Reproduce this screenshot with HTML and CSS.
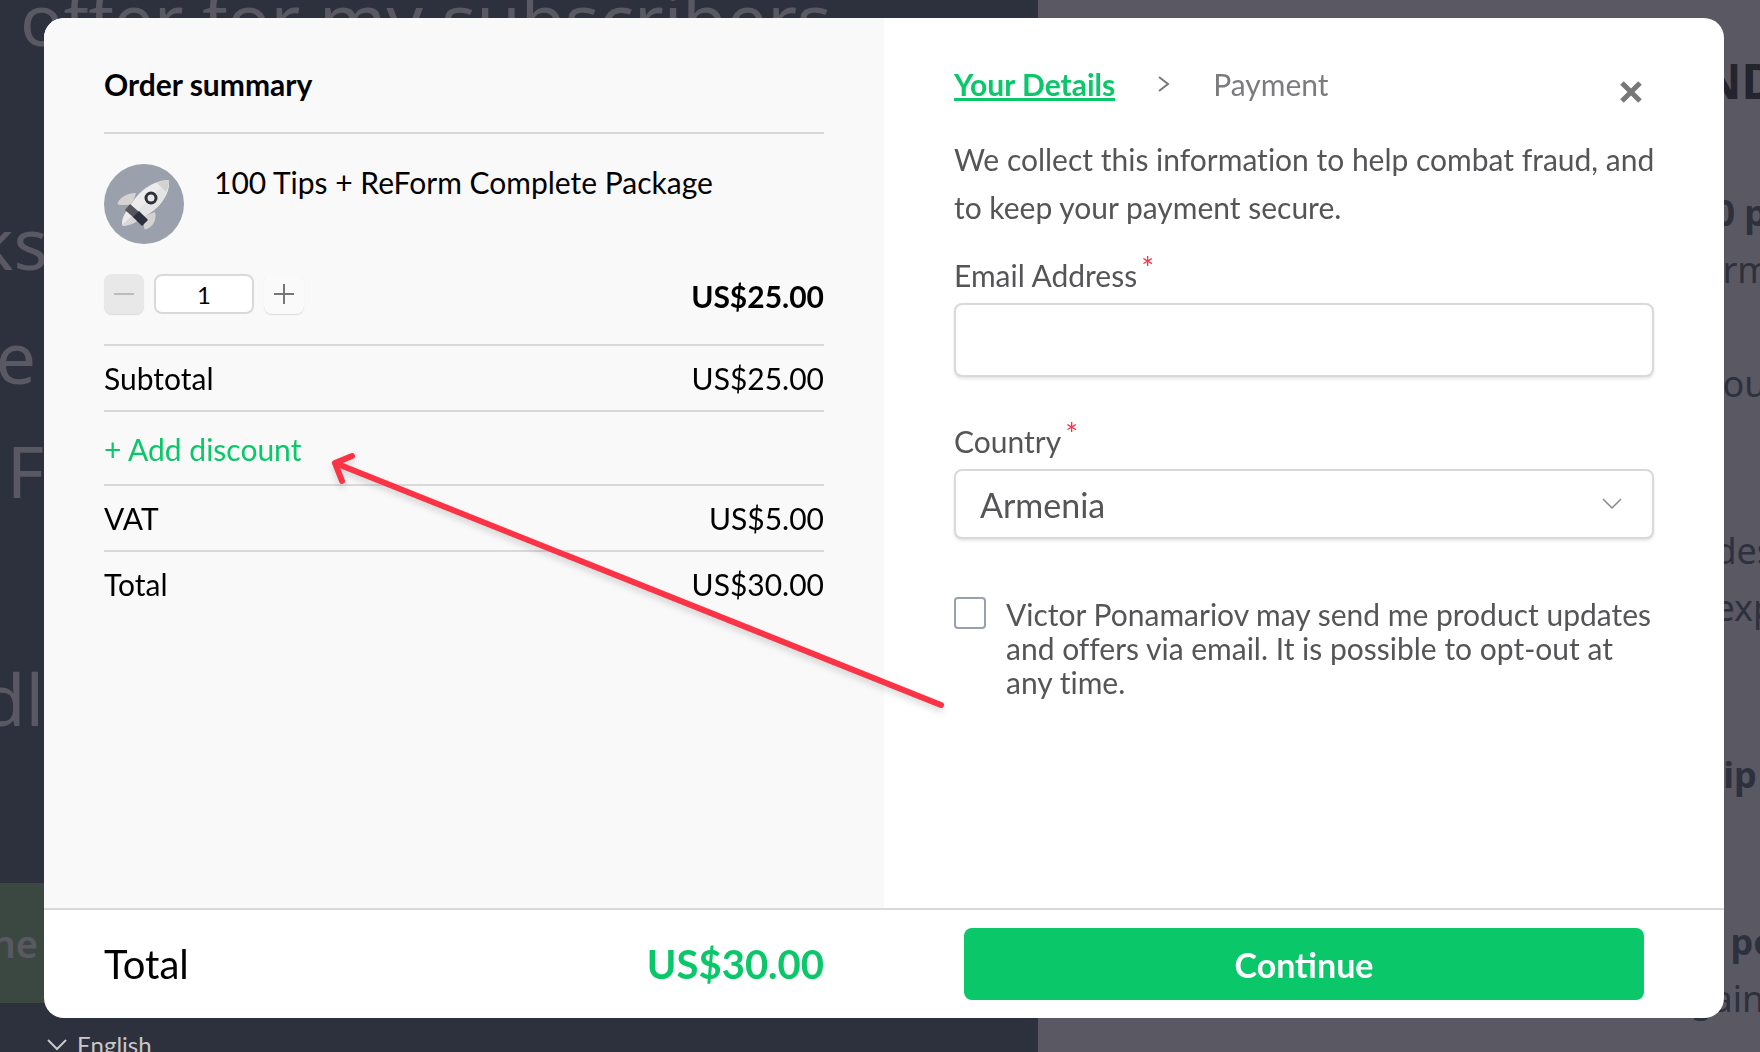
FILE: index.html
```html
<!DOCTYPE html>
<html lang="en">
<head>
    <meta charset="UTF-8">
    <meta name="viewport" content="width=device-width, initial-scale=1.0">
    <title>Checkout</title>
    <link rel="stylesheet" href="styles.css">
</head>
<body>

    <!-- page behind the dialog -->
    <div class="page" aria-hidden="true">
        <div class="page-left">
            <p class="hero-title">offer for my subscribers</p>
            <p class="hero-line line-ks"><span>ks</span></p>
            <p class="hero-line line-e"><span>e</span></p>
            <p class="hero-line line-f"><span>F</span></p>
            <p class="hero-line line-dl"><span>dl</span></p>
            <p class="hero-button"><span>he</span></p>
            <p class="language">
                <svg width="20" height="12" viewBox="0 0 20 12"><path d="M1 1l9 9 9-9" fill="none" stroke="#c9c7c7" stroke-width="2"/></svg>
                English
            </p>
        </div>
        <div class="page-right">
            <p class="side-title indent-1">ND</p>
            <p class="side-line side-bold indent-2">0 p</p>
            <p class="side-line indent-3">rm</p>
            <p class="side-line side-gap indent-3">ou</p>
            <p class="side-line side-gap-big indent-2">des</p>
            <p class="side-line indent-2">exp</p>
            <p class="side-line side-bold side-gap-big indent-1">Tip</p>
            <p class="side-line side-bold side-gap-big indent-4">po</p>
            <p class="side-line">gain</p>
        </div>
    </div>

    <div class="overlay">
        <div class="modal" role="dialog" aria-label="Checkout">
            <section class="summary">
                <h2 class="summary-title">Order summary</h2>

                <div class="product">
                    <svg class="product-icon" viewBox="0 0 80 80">
                        <circle cx="40" cy="40" r="40" fill="#9aa0ac"/>
                        <path d="M32 29C23 29 17 33 14 38c-1 2 0 3 2 3h12z" fill="#d5d2d2"/>
                        <path d="M51 48c2 8-2 14-8 17-2 1-3 0-3-2V52z" fill="#d5d2d2"/>
                        <path d="M26 44c-6 5-8 11-8 16 0 2 1 2 3 2 6-1 11-3 15-8z" fill="#d8d6d6"/>
                        <path d="M26 44c-6 5-8 11-8 17l13-12z" fill="#eceaea"/>
                        <path d="M65 16C50 16 34 27 27 41l12 12c14-7 27-20 26-37z" fill="#ececed"/>
                        <path d="M65 16L33 47l6 6c14-7 27-20 26-37z" fill="#e3e4e4"/>
                        <path d="M65 16c-4 0-8 1-12 3l9 9c2-4 3-8 3-12z" fill="#d3d1d1"/>
                        <path d="M26 40l17 15-5 6-17-15z" fill="#55545d"/>
                        <path d="M35 47l9 9-6 6-9-9z" fill="#2c303d"/>
                        <circle cx="47" cy="34" r="5" fill="#e8e8e8" stroke="#2c303d" stroke-width="3"/>
                    </svg>
                    <p class="product-name">100 Tips + ReForm Complete Package</p>
                </div>

                <div class="quantity">
                    <button class="step step-off" type="button" aria-label="Decrease" disabled>
                        <svg width="20" height="20" viewBox="0 0 20 20"><path d="M0 10h20" stroke="#bdbdbe" stroke-width="2"/></svg>
                    </button>
                    <input class="quantity-input" type="text" value="1" aria-label="Quantity">
                    <button class="step" type="button" aria-label="Increase">
                        <svg width="20" height="20" viewBox="0 0 20 20"><path d="M0 10h20M10 0v20" stroke="#777" stroke-width="2"/></svg>
                    </button>
                    <strong class="quantity-price">US$25.00</strong>
                </div>

                <div class="row"><span>Subtotal</span><span>US$25.00</span></div>
                <div class="row row-discount"><a class="discount" href="#">+ Add discount</a></div>
                <div class="row"><span>VAT</span><span>US$5.00</span></div>
                <div class="row"><span>Total</span><span>US$30.00</span></div>
            </section>

            <form class="details" id="details">
                <div class="details-head">
                    <nav class="steps">
                        <a class="steps-current" href="#details">Your Details</a>
                        <svg width="12" height="16" viewBox="0 0 12 16"><path d="M1 1l9 7-9 7" fill="none" stroke="#777" stroke-width="2"/></svg>
                        <span>Payment</span>
                    </nav>
                    <button class="close" type="button" aria-label="Close">
                        <svg width="24" height="24" viewBox="0 0 24 24"><path d="M3 3l18 18M21 3L3 21" stroke="#77777a" stroke-width="5"/></svg>
                    </button>
                </div>

                <p class="intro">We collect this information to help combat fraud, and to keep your payment secure.</p>

                <label class="label" for="email">Email Address<sup>*</sup></label>
                <input class="field" id="email" type="email">

                <label class="label label-country" for="country">Country<sup>*</sup></label>
                <div class="select">
                    <select class="field field-select" id="country">
                        <option>Armenia</option>
                    </select>
                    <svg class="select-arrow" width="20" height="12" viewBox="0 0 20 12"><path d="M1 1l9 9 9-9" fill="none" stroke="#88888c" stroke-width="1.5"/></svg>
                </div>

                <div class="consent">
                    <input class="checkbox" id="consent" type="checkbox">
                    <label for="consent">Victor Ponamariov may send me product updates and offers via email. It is possible to opt-out at any time.</label>
                </div>
            </form>

            <footer class="footer">
                <div class="footer-total">
                    <span>Total</span>
                    <strong>US$30.00</strong>
                </div>
                <div class="footer-action">
                    <button class="continue" type="submit" form="details">Continue</button>
                </div>
            </footer>
        </div>
    </div>

    <!-- arrow pointing at the discount link -->
    <svg class="arrow" width="640" height="280" viewBox="0 0 640 280">
        <path d="M621 255L15 13M32 6L15 13l7 18" fill="none" stroke="#fa3446" stroke-width="6" stroke-linecap="round" stroke-linejoin="round"/>
    </svg>

</body>
</html>
```
FILE: styles.css
```css
* {
    box-sizing: border-box;
}
body, html {
    margin: 0;
    padding: 0;
    height: 100%;
    overflow: hidden;
}
body {
    font-family: Lato, sans-serif;
    font-size: 30px;
    line-height: 36px;
    font-variant-ligatures: none;
    color: #000;
}
p, h2 {
    margin: 0;
}
a {
    text-decoration: none;
}
button, input, select {
    font-family: inherit;
    font-size: inherit;
    color: inherit;
}

/* Page behind */
.page {
    display: grid;
    grid-template-columns: 59% 41%;
    height: 100%;
    overflow: hidden;
    font-family: "Noto Sans", sans-serif;
    white-space: nowrap;
}
.page-left {
    background: #2d303d;
    color: #5a5963;
    overflow: hidden;
}
.hero-title {
    padding-left: 20px;
    margin-top: -32px;
    font-size: 72px;
    line-height: 100px;
}
.hero-line {
    display: flex;
    justify-content: flex-end;
    width: 44px;
    font-size: 72px;
    line-height: 114px;
}
.line-ks {
    width: 48px;
    margin-top: 117px;
}
.line-e {
    width: 36px;
}
.line-dl {
    margin-top: 114px;
}
.hero-button {
    display: flex;
    justify-content: flex-end;
    align-items: center;
    width: 44px;
    height: 120px;
    padding-right: 6px;
    margin-top: 128px;
    background: #3b4842;
    font-size: 38px;
    font-weight: 600;
}
.language {
    display: flex;
    align-items: center;
    gap: 10px;
    padding-left: 47px;
    margin-top: 24px;
    font-family: Lato, sans-serif;
    font-size: 24px;
    color: #c9c7c7;
}
.page-right {
    padding: 46px 0 0 652px;
    background: #5a5963;
    color: #2d303d;
    overflow: hidden;
}
.side-title {
    margin-bottom: 68px;
    font-size: 48px;
    font-weight: 700;
    line-height: 70px;
    color: #24242e;
}
.side-line {
    font-size: 36px;
    line-height: 57px;
}
.side-bold {
    font-weight: 700;
}
.side-gap {
    margin-top: 57px;
}
.side-gap-big {
    margin-top: 110px;
}
.indent-1 {
    padding-left: 12px;
}
.indent-2 {
    padding-left: 24px;
}
.indent-3 {
    padding-left: 32px;
}
.indent-4 {
    padding-left: 40px;
}

/* Modal */
.overlay {
    position: fixed;
    inset: 0;
    padding: 18px 36px 34px 44px;
}
.modal {
    display: grid;
    grid-template-columns: 1fr 1fr;
    grid-template-rows: 1fr auto;
    height: 100%;
    border-radius: 20px;
    background: #fff;
    overflow: hidden;
}

/* Order summary */
.summary {
    padding: 48px 60px 0;
    background: #f9f9f9;
}
.summary-title {
    padding-bottom: 30px;
    border-bottom: 2px solid #d9d9d9;
    font-size: 30px;
    font-weight: 700;
}
.product {
    display: flex;
    gap: 30px;
    padding: 30px 0;
}
.product-icon {
    width: 80px;
    height: 80px;
}
.quantity {
    display: flex;
    align-items: center;
    gap: 10px;
    padding-bottom: 30px;
}
.step {
    display: flex;
    align-items: center;
    justify-content: center;
    width: 40px;
    height: 40px;
    padding: 0;
    border: 0;
    border-radius: 8px;
    background: #fafafa;
    box-shadow: 0 1px 1px #d9d9d9;
}
.step-off {
    background: #e8e8e9;
}
.quantity-input {
    width: 100px;
    height: 40px;
    border: 2px solid #d9d9d9;
    border-radius: 8px;
    background: #fff;
    font-size: 24px;
    text-align: center;
}
.quantity-price {
    padding-top: 4px;
    margin-left: auto;
}
.row {
    display: flex;
    justify-content: space-between;
    padding: 14px 0;
    border-top: 2px solid #d9d9d9;
}
.row-discount {
    padding: 19px 0 17px;
}
.discount {
    color: #0ac769;
}

/* Details form */
.details {
    padding: 48px 70px 0;
    color: #555558;
}
.details-head {
    display: flex;
    justify-content: space-between;
    align-items: flex-start;
    margin-bottom: 17px;
}
.steps {
    display: flex;
    align-items: center;
    gap: 43px;
    color: #7c7c7f;
}
.steps-current {
    color: #0ac769;
    font-weight: 700;
    text-decoration: underline;
    text-decoration-thickness: 3px;
}
.close {
    display: flex;
    padding: 14px 11px;
    border: 0;
    background: none;
}
.intro {
    margin-right: -20px;
    line-height: 48px;
}
.label {
    display: block;
    margin-top: 16px;
    line-height: 56px;
}
.label sup {
    margin-left: 4px;
    font-size: 30px;
    line-height: 0;
    vertical-align: 8px;
    color: #fa3446;
}
.field {
    display: block;
    width: 100%;
    height: 74px;
    padding: 0 24px;
    border: 2px solid #d9d9d9;
    border-radius: 8px;
    background: #fff;
    box-shadow: 0 2px 3px rgba(0, 0, 0, 0.1);
    font-size: 34px;
}
.label-country {
    margin-top: 36px;
}
.select {
    position: relative;
}
.field-select {
    height: 70px;
    appearance: none;
}
.select-arrow {
    position: absolute;
    top: 29px;
    right: 32px;
}
.consent {
    display: flex;
    gap: 20px;
    margin-top: 58px;
    line-height: 34px;
}
.checkbox {
    flex: none;
    width: 32px;
    height: 32px;
    margin: 0;
    border: 2px solid #9aa0ac;
    border-radius: 4px;
    appearance: none;
}

/* Footer */
.footer {
    grid-column: 1 / 3;
    display: grid;
    grid-template-columns: 1fr 1fr;
    border-top: 2px solid #d9d9d9;
}
.footer-total {
    display: flex;
    justify-content: space-between;
    align-items: center;
    padding: 0 60px;
    font-size: 40px;
}
.footer-total strong {
    color: #0ac769;
}
.footer-action {
    padding: 18px 80px;
}
.continue {
    display: block;
    width: 100%;
    height: 72px;
    border: 0;
    border-radius: 8px;
    background: #0ac769;
    color: #fff;
    font-size: 34px;
    font-weight: 700;
}

.arrow {
    position: absolute;
    top: 450px;
    left: 320px;
    filter: drop-shadow(0 4px 3px rgba(0, 0, 0, 0.15));
}
```
